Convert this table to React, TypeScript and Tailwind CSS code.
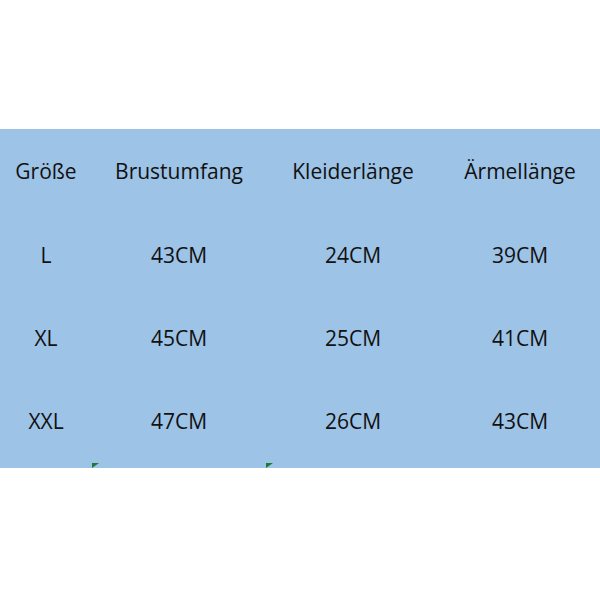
const header = ['Größe', 'Brustumfang', 'Kleiderlänge', 'Ärmellänge'];

const rows = [
  ['L', '43CM', '24CM', '39CM'],
  ['XL', '45CM', '25CM', '41CM'],
  ['XXL', '47CM', '26CM', '43CM'],
];

function Marker() {
  return (
    <svg width="7" height="5" viewBox="0 0 7 5" className="block">
      <polygon points="0,0 7,0 0,5" fill="#1f7a35" />
    </svg>
  );
}

export default function App() {
  return (
    <div className="w-[600px] h-[600px] bg-white flex flex-col" style={{ fontFamily: '"Open Sans", "Noto Sans", sans-serif' }}>
      <div className="h-[129px]" />
      <div className="bg-[#9dc3e6] text-[#111111] text-[21px]">
        <div className="grid grid-cols-[92px_174px_174px_160px]">
          {header.map((h) => (
            <div key={h} className="h-[85px] flex items-center justify-center">{h}</div>
          ))}
          {rows.map((r) =>
            r.map((c, i) => (
              <div key={r[0] + i} className="h-[83px] flex items-center justify-center">{c}</div>
            ))
          )}
        </div>
        <div className="h-[5px] flex">
          <div className="w-[92px]" />
          <Marker />
          <div className="w-[167px]" />
          <Marker />
        </div>
      </div>
    </div>
  );
}
